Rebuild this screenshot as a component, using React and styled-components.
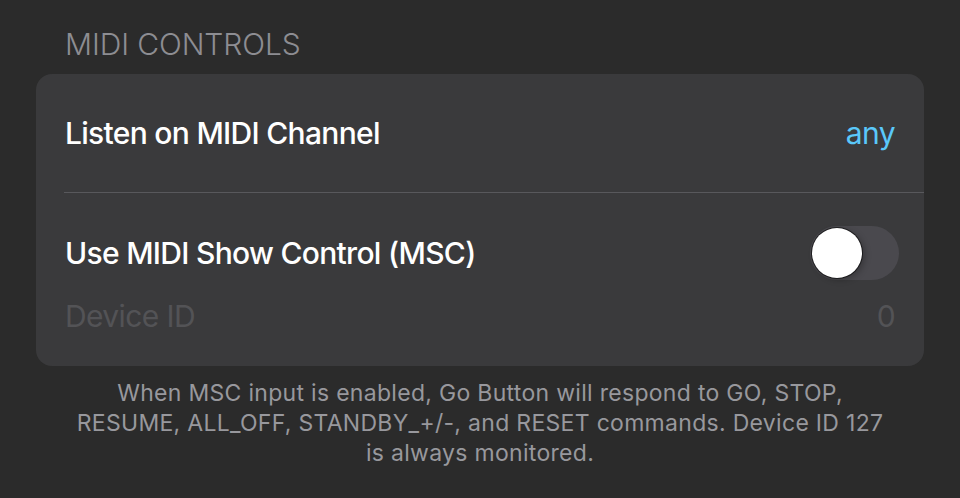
import React from 'react'
import styled, { createGlobalStyle } from 'styled-components'

const GlobalStyle = createGlobalStyle`
  html, body {
    margin: 0;
    padding: 0;
    background: #2b2b2b;
  }
  body {
    font-family: Inter, "Noto Sans", sans-serif;
    -webkit-font-smoothing: antialiased;
  }
`

const Page = styled.div`
  width: 960px;
  height: 498px;
  box-sizing: border-box;
  padding: 24px 36px 0;
  background: #2b2b2b;
  overflow: hidden;
`

const SectionTitle = styled.div`
  padding-left: 29px;
  font-size: 30px;
  font-weight: 300;
  letter-spacing: -0.1px;
  color: #8d8d92;
  height: 50px;
  line-height: 40px;
`

const Card = styled.div`
  background: #3a3a3c;
  border-radius: 16px;
  overflow: hidden;
  padding-bottom: ${({ bottom = 0 }) => bottom}px;
`

const Row = styled.div`
  display: flex;
  align-items: center;
  justify-content: space-between;
  height: ${({ height }) => height}px;
  padding: 0 25px 0 29px;
  margin-top: ${({ offset = 0 }) => offset}px;
`

const Divider = styled.div`
  height: 1px;
  margin-left: 28px;
  background: #58585c;
`

const Label = styled.div`
  font-size: 30px;
  font-weight: ${({ muted }) => (muted ? 400 : 500)};
  letter-spacing: ${({ muted }) => (muted ? '-0.6px' : '-0.7px')};
  color: ${({ muted }) => (muted ? '#535356' : '#ffffff')};
`

const Value = styled.div`
  font-size: 30px;
  letter-spacing: -0.6px;
  padding-right: 4px;
  color: ${({ color }) => color};
`

const Toggle = styled.div`
  width: 89px;
  height: 54px;
  border-radius: 27px;
  background: #4a494e;
  display: flex;
  align-items: center;
  padding: 2px;
  box-sizing: border-box;
`

const Knob = styled.div`
  width: 50px;
  height: 50px;
  border-radius: 50%;
  background: #ffffff;
  box-shadow: 0 0 0 1px rgba(0, 0, 0, 0.55), 3px 2px 6px rgba(0, 0, 0, 0.25);
`

const Footer = styled.p`
  margin: 12px auto 0;
  width: 816px;
  text-align: center;
  font-size: 23px;
  letter-spacing: 0.3px;
  line-height: 30px;
  color: #98989d;
`

export default function App() {
  return (
    <Page>
      <GlobalStyle />
      <SectionTitle>MIDI CONTROLS</SectionTitle>
      <Card bottom={32}>
        <Row height={118}>
          <Label>Listen on MIDI Channel</Label>
          <Value color="#5ac8fa">any</Value>
        </Row>
        <Divider />
        <Row height={55} offset={32}>
          <Label>Use MIDI Show Control (MSC)</Label>
          <Toggle>
            <Knob />
          </Toggle>
        </Row>
        <Row height={36} offset={18}>
          <Label muted>Device ID</Label>
          <Value color="#535356">0</Value>
        </Row>
      </Card>
      <Footer>
        When MSC input is enabled, Go Button will respond to GO, STOP,
        RESUME, ALL_OFF, STANDBY_+/-, and RESET commands. Device ID 127 is
        always monitored.
      </Footer>
    </Page>
  )
}
